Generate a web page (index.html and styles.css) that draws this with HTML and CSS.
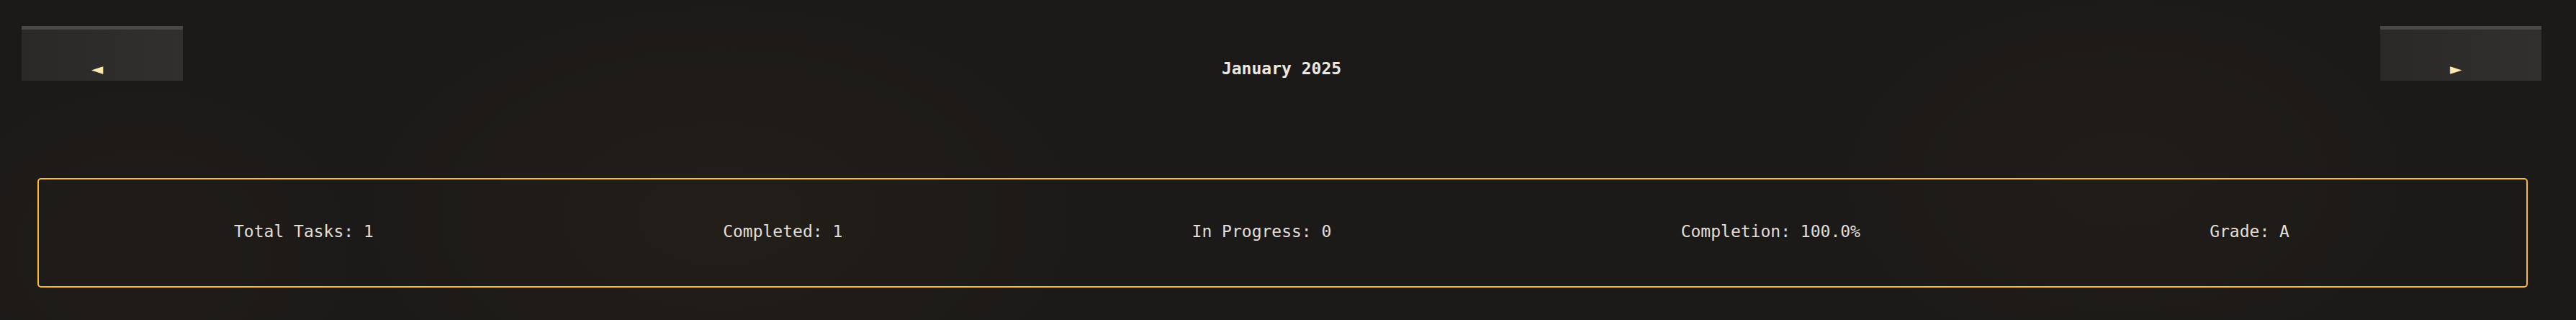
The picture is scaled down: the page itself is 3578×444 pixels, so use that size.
FILE: index.html
```html
<!DOCTYPE html>
<html lang="en">
<head>
<meta charset="utf-8">
<title>Calendar</title>
<link rel="stylesheet" href="styles.css">
</head>
<body>
<div class="page">
  <header class="month-nav">
    <button class="nav-btn nav-prev" type="button">◄</button>
    <h1 class="month-title">January 2025</h1>
    <button class="nav-btn nav-next" type="button">►</button>
  </header>
  <section class="stats">
    <div class="stat">Total Tasks: 1</div>
    <div class="stat">Completed: 1</div>
    <div class="stat">In Progress: 0</div>
    <div class="stat">Completion: 100.0%</div>
    <div class="stat">Grade: A</div>
  </section>
</div>
</body>
</html>
```
FILE: styles.css
```css
html, body {
  margin: 0;
  padding: 0;
}
body {
  width: 3578px;
  height: 444px;
  overflow: hidden;
  background-color: #1c1a18;
  background-image:
    radial-gradient(ellipse 500px 300px at 1000px 300px, rgba(40, 33, 26, 0.55), transparent),
    radial-gradient(ellipse 400px 260px at 2950px 250px, rgba(38, 31, 25, 0.5), transparent),
    radial-gradient(ellipse 300px 240px at 200px 350px, rgba(36, 30, 24, 0.45), transparent);
  font-family: "DejaVu Sans Mono", "Liberation Mono", monospace;
  color: #e4e0da;
}
.page {
  width: 3500px;
  margin-left: 30px;
  padding-top: 36px;
}
.month-nav {
  display: flex;
  align-items: baseline;
  justify-content: space-between;
}
.nav-btn {
  width: 224px;
  height: 76px;
  box-sizing: border-box;
  border: none;
  border-top: 5px solid #4a4744;
  border-radius: 0;
  background: linear-gradient(90deg, #2b2927, #32302e);
  color: #fde8b0;
  font-family: "DejaVu Sans", sans-serif;
  font-size: 21px;
  line-height: 19px;
  padding: 46px 14px 6px 0;
  text-align: center;
}
.month-title {
  margin: 0;
  flex: 1;
  text-align: center;
  font-size: 23px;
  font-weight: bold;
  color: #ebe7e1;
}
.stats {
  margin: 135px 19px 0 22px;
  border: 2px solid #fbbf24;
  border-radius: 5px;
  display: flex;
  justify-content: space-between;
  padding: 59px 329px 63px 271px;
  font-size: 23px;
  color: #e2ded8;
}
.stat {
  white-space: pre;
}
```
